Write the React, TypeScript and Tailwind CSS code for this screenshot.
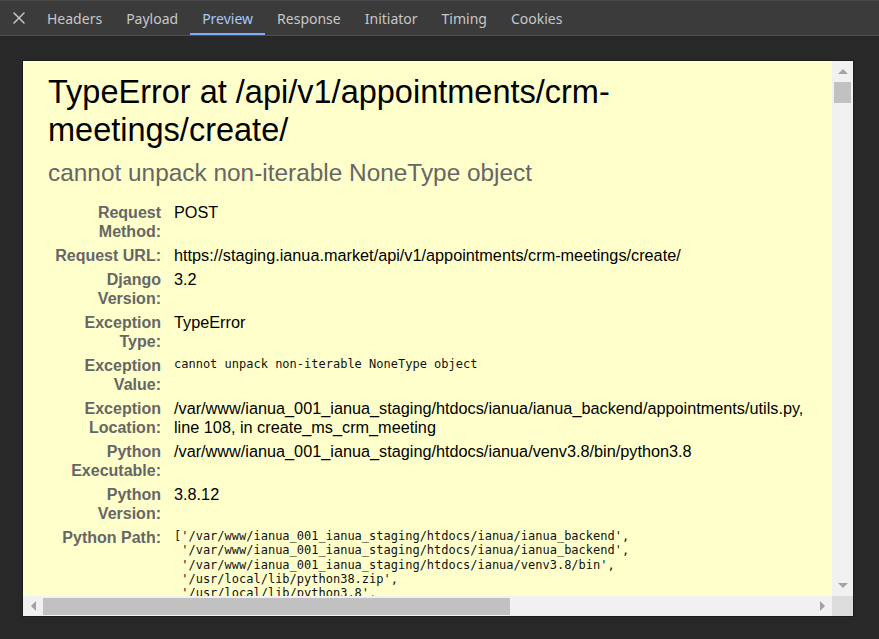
import React from 'react';

const tabs = ['Headers', 'Payload', 'Preview', 'Response', 'Initiator', 'Timing', 'Cookies'];
const activeTab = 'Preview';

const pythonPath = [
  "['/var/www/ianua_001_ianua_staging/htdocs/ianua/ianua_backend',",
  " '/var/www/ianua_001_ianua_staging/htdocs/ianua/ianua_backend',",
  " '/var/www/ianua_001_ianua_staging/htdocs/ianua/venv3.8/bin',",
  " '/usr/local/lib/python38.zip',",
  " '/usr/local/lib/python3.8',",
  " '/usr/local/lib/python3.8/lib-dynload',",
  " '/var/www/ianua_001_ianua_staging/htdocs/ianua/venv3.8/lib/python3.8/site-packages']",
];

const meta: { label: string; value: React.ReactNode; mono?: boolean }[] = [
  { label: 'Request Method:', value: 'POST' },
  { label: 'Request URL:', value: 'https://staging.ianua.market/api/v1/appointments/crm-meetings/create/' },
  { label: 'Django Version:', value: '3.2' },
  { label: 'Exception Type:', value: 'TypeError' },
  { label: 'Exception Value:', value: 'cannot unpack non-iterable NoneType object', mono: true },
  {
    label: 'Exception Location:',
    value: '/var/www/ianua_001_ianua_staging/htdocs/ianua/ianua_backend/appointments/utils.py, line 108, in create_ms_crm_meeting',
  },
  { label: 'Python Executable:', value: '/var/www/ianua_001_ianua_staging/htdocs/ianua/venv3.8/bin/python3.8' },
  { label: 'Python Version:', value: '3.8.12' },
  { label: 'Python Path:', value: pythonPath.join('\n'), mono: true },
];

const CloseIcon = () => (
  <svg width="12" height="12" viewBox="0 0 12 12" fill="none">
    <path d="M1 1L11 11M11 1L1 11" stroke="#c7c7c7" strokeWidth="1.5" strokeLinecap="round" />
  </svg>
);

const Arrow = ({ dir }: { dir: 'up' | 'down' | 'left' | 'right' }) => {
  const pts = {
    up: '0,5 5,0 10,5',
    down: '0,0 10,0 5,5',
    left: '5,0 5,10 0,5',
    right: '0,0 0,10 5,5',
  }[dir];
  const vertical = dir === 'up' || dir === 'down';
  return (
    <svg width={vertical ? 10 : 5} height={vertical ? 5 : 10} viewBox={vertical ? '0 0 10 5' : '0 0 5 10'}>
      <polygon points={pts} fill="#a3a3a3" />
    </svg>
  );
};

const App: React.FC = () => {
  return (
    <div className="w-[879px] h-[639px] bg-[#282828] flex flex-col overflow-hidden">
      {/* devtools tab strip */}
      <div
        className="h-[36px] shrink-0 flex items-stretch bg-[#3b3b3b] border-t border-b border-t-[#4a4a4a] border-b-[#505050] text-[14px] text-[#c7c7c7]"
        style={{ fontFamily: '"Noto Sans", "Open Sans", sans-serif' }}
      >
        <div className="w-[35px] flex items-center pl-[13px]">
          <CloseIcon />
        </div>
        {tabs.map((t) => (
          <div key={t} className="relative flex items-center px-[12px]">
            <span className={t === activeTab ? 'text-[#a8c7fa]' : ''}>{t}</span>
            {t === activeTab && <div className="absolute left-0 right-0 bottom-0 h-[2px] bg-[#7cacf8]" />}
          </div>
        ))}
      </div>

      {/* preview panel */}
      <div className="pl-[22px] pt-[24px]">
        <div className="w-[832px] h-[557px] border border-[#1c1c1c] flex flex-col">
          <div className="flex h-[535px]">
            <div
              className="w-[809px] h-[535px] overflow-hidden bg-[#ffffcc] px-[25px] pt-[12px] text-black"
              style={{ fontFamily: '"Liberation Sans", Arial, sans-serif' }}
            >
              <h1 className="text-[32.5px] leading-[38px] font-normal">
                TypeError at /api/v1/appointments/crm-meetings/create/
              </h1>
              <h2 className="mt-[10px] text-[24.4px] leading-[28px] font-normal text-[#666666]">
                cannot unpack non-iterable NoneType object
              </h2>
              <div className="mt-[13px] grid grid-cols-[121px_1fr] text-[16.25px] leading-[19px]">
                {meta.map((row) => (
                  <React.Fragment key={row.label}>
                    <div className="pl-[3px] pr-[8px] pt-[2.5px] pb-[2.5px] text-right text-[16px] font-bold text-[#666666]">
                      {row.label}
                    </div>
                    <div className="pl-[5px] pr-[3px] pt-[2.5px] pb-[2.5px]">
                      {row.mono ? (
                        <pre
                          className="pt-[1.5px] text-[12px] leading-[14.25px] whitespace-pre text-[#111111]"
                          style={{ fontFamily: '"DejaVu Sans Mono", "Liberation Mono", monospace' }}
                        >
                          {row.value}
                        </pre>
                      ) : (
                        row.value
                      )}
                    </div>
                  </React.Fragment>
                ))}
              </div>
            </div>
            {/* vertical scrollbar */}
            <div className="w-[21px] bg-[#f1f1f1] flex flex-col items-center">
              <div className="h-[21px] flex items-center justify-center">
                <Arrow dir="up" />
              </div>
              <div className="w-[17px] h-[21px] bg-[#c1c1c1]" />
              <div className="flex-1" />
              <div className="h-[21px] flex items-center justify-center">
                <Arrow dir="down" />
              </div>
            </div>
          </div>
          {/* horizontal scrollbar */}
          <div className="flex h-[20px]">
            <div className="w-[809px] bg-[#f1f1f1] flex items-center">
              <div className="w-[20px] flex items-center justify-center">
                <Arrow dir="left" />
              </div>
              <div className="w-[467px] h-[17px] bg-[#c1c1c1]" />
              <div className="flex-1" />
              <div className="w-[20px] flex items-center justify-center">
                <Arrow dir="right" />
              </div>
            </div>
            <div className="w-[21px] bg-[#dcdcdc]" />
          </div>
        </div>
      </div>
    </div>
  );
};

export default App;
